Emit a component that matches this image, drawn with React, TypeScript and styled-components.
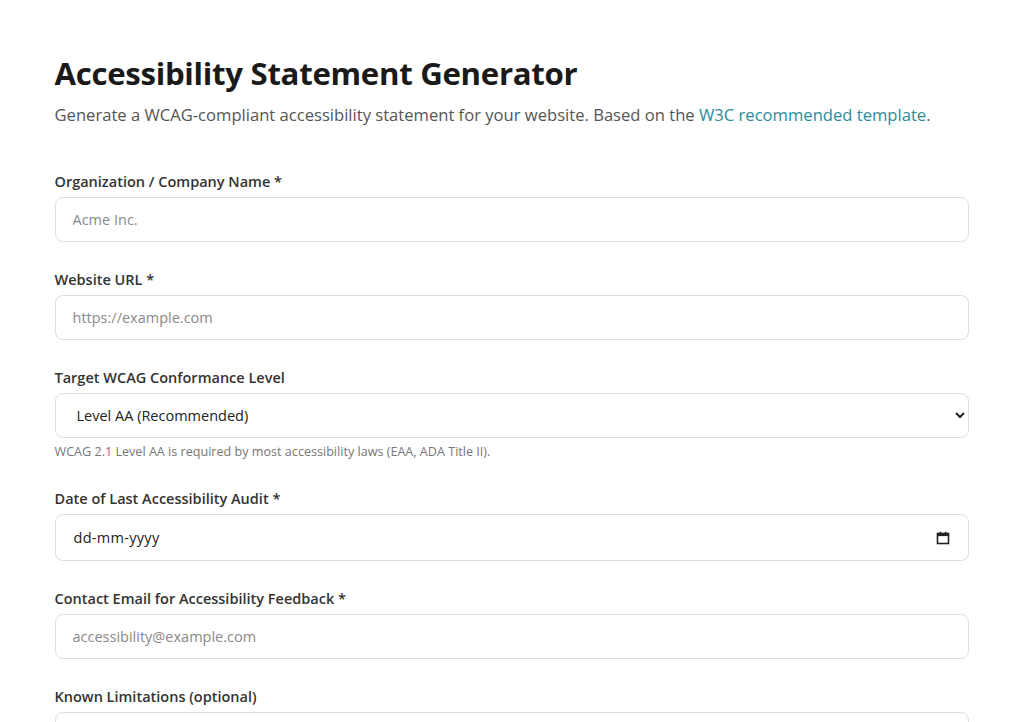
import styled, { createGlobalStyle } from 'styled-components'

const GlobalStyle = createGlobalStyle`
  body {
    margin: 0;
    background: #ffffff;
    font-family: 'Open Sans', 'Noto Sans', sans-serif;
    color: #222;
  }
`

const Page = styled.main`
  max-width: 914px;
  margin: 0 auto;
  padding: 54px 1px 0 0;
`

const Title = styled.h1`
  margin: 0;
  font-size: 31.2px;
  line-height: 38px;
  font-weight: 700;
  color: #1a1a1a;
  letter-spacing: -0.3px;
`

const Intro = styled.p`
  margin: 10px 0 0;
  font-size: 16.6px;
  line-height: 25px;
  color: #555;

  a {
    color: #2a8c9c;
    text-decoration: none;
  }
`

const Form = styled.form`
  margin-top: 44px;
`

const Field = styled.div`
  margin-bottom: 27px;
`

const Label = styled.label`
  display: block;
  margin-bottom: 4px;
  font-size: 14.5px;
  line-height: 22px;
  font-weight: 600;
  color: #333;
`

const boxStyles = `
  box-sizing: border-box;
  width: 100%;
  border: 1px solid #dedede;
  border-radius: 8px;
  background: #fff;
  font-family: inherit;
  font-size: 14.5px;
  color: #222;
  outline: none;
`

const TextInput = styled.input`
  ${boxStyles}
  height: 45px;
  padding: 0 17px;

  &::placeholder {
    color: #8a8a8a;
  }
`

const Select = styled.select`
  ${boxStyles}
  height: 45px;
  padding: 0 13px 0 17px;
`

const DateBox = styled.div`
  ${boxStyles}
  height: 47px;
  padding: 0 18px;
  display: flex;
  align-items: center;
  justify-content: space-between;

  span {
    color: #222;
    letter-spacing: 0.3px;
  }

  svg {
    display: block;
  }
`

const TextArea = styled.textarea`
  ${boxStyles}
  height: 110px;
  padding: 12px 17px;
  resize: vertical;
`

const Help = styled.p`
  margin: 5px 0 0;
  font-size: 12.6px;
  line-height: 18px;
  color: #777;
`

const CalendarIcon = () => (
  <svg width='14' height='14' viewBox='0 0 14 14' aria-hidden='true'>
    <rect x='1.5' y='2.5' width='11' height='10' fill='none' stroke='#222' strokeWidth='1.6' />
    <rect x='1.5' y='2.5' width='11' height='2.6' fill='#222' />
    <rect x='3.6' y='0.8' width='1.6' height='2.2' fill='#222' />
    <rect x='8.8' y='0.8' width='1.6' height='2.2' fill='#222' />
  </svg>
)

export default function App() {
  return (
    <>
      <GlobalStyle />
      <Page>
        <Title>Accessibility Statement Generator</Title>
        <Intro>
          Generate a WCAG-compliant accessibility statement for your website. Based on the{' '}
          <a href='#w3c'>W3C recommended template</a>.
        </Intro>
        <Form onSubmit={(e) => e.preventDefault()}>
          <Field>
            <Label htmlFor='org'>Organization / Company Name *</Label>
            <TextInput id='org' placeholder='Acme Inc.' />
          </Field>
          <Field>
            <Label htmlFor='url'>Website URL *</Label>
            <TextInput id='url' placeholder='https://example.com' />
          </Field>
          <Field>
            <Label htmlFor='level'>Target WCAG Conformance Level</Label>
            <Select id='level' defaultValue='AA'>
              <option value='A'>Level A</option>
              <option value='AA'>Level AA (Recommended)</option>
              <option value='AAA'>Level AAA</option>
            </Select>
            <Help>WCAG 2.1 Level AA is required by most accessibility laws (EAA, ADA Title II).</Help>
          </Field>
          <Field>
            <Label>Date of Last Accessibility Audit *</Label>
            <DateBox>
              <span>dd-mm-yyyy</span>
              <CalendarIcon />
            </DateBox>
          </Field>
          <Field>
            <Label htmlFor='email'>Contact Email for Accessibility Feedback *</Label>
            <TextInput id='email' placeholder='accessibility@example.com' />
          </Field>
          <Field>
            <Label htmlFor='limits'>Known Limitations (optional)</Label>
            <TextArea id='limits' />
          </Field>
        </Form>
      </Page>
    </>
  )
}
